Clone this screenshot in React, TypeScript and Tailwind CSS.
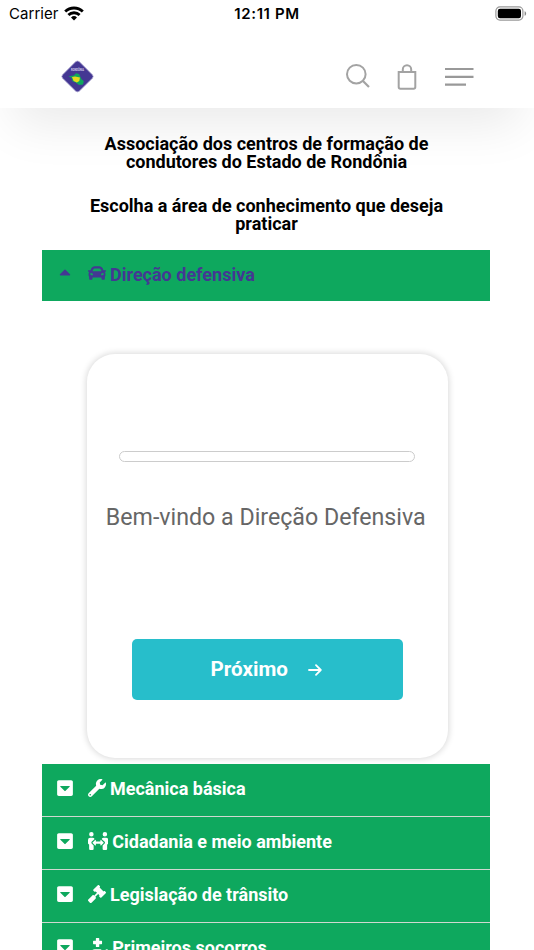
import type { ReactNode } from 'react';
import {
  FaCar,
  FaCaretSquareDown,
  FaCaretUp,
  FaGavel,
  FaHandHoldingMedical,
  FaPeopleArrows,
  FaWrench,
} from 'react-icons/fa';

export default function App() {
  return (
    <div className="h-[950px] w-full overflow-hidden bg-white font-['Roboto',sans-serif]">
      <div className="relative h-[108px] bg-white shadow-[0_30px_50px_-14px_rgba(0,0,0,0.085)]">
        <StatusBar />
        <Header />
      </div>

      <main className="relative pt-[27px]">
        <h2 className="mr-[1px] text-center text-[18px] leading-[18px] font-bold text-black">
          Associação dos centros de formação de
          <br />
          condutores do Estado de Rondônia
        </h2>
        <h2 className="mt-[26px] mr-[1px] text-center text-[18px] leading-[18px] font-bold text-black">
          Escolha a área de conhecimento que deseja
          <br />
          praticar
        </h2>

        <div className="mt-[17px] mr-[44px] ml-[42px]">
          <AccordionRow active icon={<FaCar />} title="Direção defensiva" />
          <QuizCard />
          <AccordionRow icon={<FaWrench />} title="Mecânica básica" />
          <AccordionRow icon={<FaPeopleArrows className="w-[20.25px]" />} title="Cidadania e meio ambiente" />
          <AccordionRow icon={<FaGavel />} title="Legislação de trânsito" />
          <AccordionRow icon={<FaHandHoldingMedical className="w-[20.25px]" />} title="Primeiros socorros" />
        </div>
      </main>
    </div>
  );
}

function StatusBar() {
  return (
    <div className="grid h-7 grid-cols-3 items-center pr-[7px] pl-[9px] font-['Inter',sans-serif] text-[15px] leading-7 text-black">
      <div className="flex items-center gap-[5px]">
        <span className="tracking-[0.05px]">Carrier</span>
        <svg width="20" height="15" viewBox="0 0 20 15" className="mb-[2px]">
          <path d="M10 14.6 7 11.5a4.3 4.3 0 0 1 6 0Z" fill="#000" />
          <path d="M4.4 9.1a7.9 7.9 0 0 1 11.2 0M1.2 5.6a12.6 12.6 0 0 1 17.6 0" fill="none" stroke="#000" strokeWidth="2.8" />
        </svg>
      </div>
      <span className="-ml-[2px] text-center font-semibold tracking-[0.6px] whitespace-nowrap">12:11 PM</span>
      <svg width="32" height="15" viewBox="0 0 32 15" className="mb-[2px] justify-self-end">
        <rect x="0.9" y="0.9" width="27" height="13.2" rx="4" fill="none" stroke="#999" strokeWidth="1.2" />
        <rect x="2.8" y="2.7" width="23.2" height="9.6" rx="2.2" fill="#000" />
        <path d="M29.6 5.2c2 .6 2 4 0 4.6Z" fill="#888" />
      </svg>
    </div>
  );
}

function Header() {
  return (
    <header className="flex h-20 items-start justify-between pt-[32px] pr-[60.5px] pl-[61px]">
      <Logo />
      <div className="flex items-start">
        <svg width="26" height="26" viewBox="0 0 26 26" fill="none" stroke="#a3a3a3" strokeWidth="2" className="mt-[3px]">
          <circle cx="11.3" cy="11.2" r="9.3" />
          <path d="m18 18 6 6" strokeWidth="2.2" />
        </svg>
        <svg width="20" height="26" viewBox="0 0 20 26" fill="none" stroke="#a3a3a3" strokeWidth="2" className="mt-[3.5px] ml-[26px]">
          <path d="M1.7 8h16.6v15a1.7 1.7 0 0 1-1.7 1.7H3.4A1.7 1.7 0 0 1 1.7 23ZM5.8 8V5.5a4.2 4.2 0 0 1 8.4 0V8" />
        </svg>
        <svg width="29" height="20" viewBox="0 0 29 20" stroke="#999" strokeWidth="2.2" className="mt-[7px] ml-[28px]">
          <path d="M0 2h28.5M0 9.8h28.5M0 17.6h21" />
        </svg>
      </div>
    </header>
  );
}

function Logo() {
  return (
    <svg width="33" height="33" viewBox="0 0 33 33">
      <path d="M14.8 1.6q1.7-1.2 3.4 0L31.4 14.8q1.6 1.7 0 3.4L18.2 31.2q-1.7 1.3-3.4 0L1.6 18.2q-1.6-1.7 0-3.4Z" fill="#443793" stroke="#a9a3cf" strokeWidth="0.8" />
      <text x="16.5" y="10.6" textAnchor="middle" fontSize="2.6" fontWeight="700" fill="#d4d0ea" textLength="13">
        RONDÔNIA
      </text>
      <path d="M7.5 16.3 12.8 15.5 15 13.2l3 .7 1.3 2.8 1.2 2.6 2.3 1.7-.8 3.5-4 .6-3.2-2.5-3.3-1.4-1-3.5Z" fill="#0fa85e" />
      <path d="m11 17 3-.6 5 1-.7 3.6-2.4 1.5-3.3-1.4Z" fill="#e6d91e" />
    </svg>
  );
}

interface AccordionRowProps {
  icon: ReactNode;
  title: string;
  active?: boolean;
}

function AccordionRow({ icon, title, active = false }: AccordionRowProps) {
  return (
    <div
      className={
        active
          ? 'flex h-[51px] items-center bg-[#0ea85e] pl-[14px] text-[18px] font-bold text-[#443793]'
          : 'flex h-[53px] items-center border-b border-[#cfd8d0] bg-[#0ea85e] pl-[14px] text-[18px] font-bold text-white'
      }
    >
      <span className={active ? 'mb-[7px] flex w-[32px]' : 'mb-[5px] flex w-[32px]'}>
        {active ? <FaCaretUp /> : <FaCaretSquareDown />}
      </span>
      <span className="mr-[4px] mb-[5px]">{icon}</span>
      <span className="mb-[3px]">{title}</span>
    </div>
  );
}

function QuizCard() {
  return (
    <section className="mt-[53px] mb-[6px] ml-[45px] flex h-[404px] w-[360.5px] flex-col items-center rounded-[28px] bg-white pt-[97px] shadow-[0_0_6px_1px_rgba(0,0,0,0.15)]">
      <div className="h-[10.5px] w-[296px] rounded-full border border-[#cccccc]" />
      <p className="mt-[40px] mr-[3px] text-[23.2px] leading-[30px] whitespace-nowrap text-[#666666]">
        Bem-vindo a Direção Defensiva
      </p>
      <button className="mt-[107.5px] flex h-[61px] w-[270.5px] items-center justify-center gap-[20px] rounded-[5px] bg-[#27becb] pr-[2px] text-[20.6px] font-bold text-white">
        Próximo
        <svg width="14" height="12" viewBox="0 0 14 12" fill="none" stroke="currentColor" strokeWidth="1.8" strokeLinecap="round" strokeLinejoin="round">
          <path d="M1 6h11.6M8 1.2 12.8 6 8 10.8" />
        </svg>
      </button>
    </section>
  );
}
